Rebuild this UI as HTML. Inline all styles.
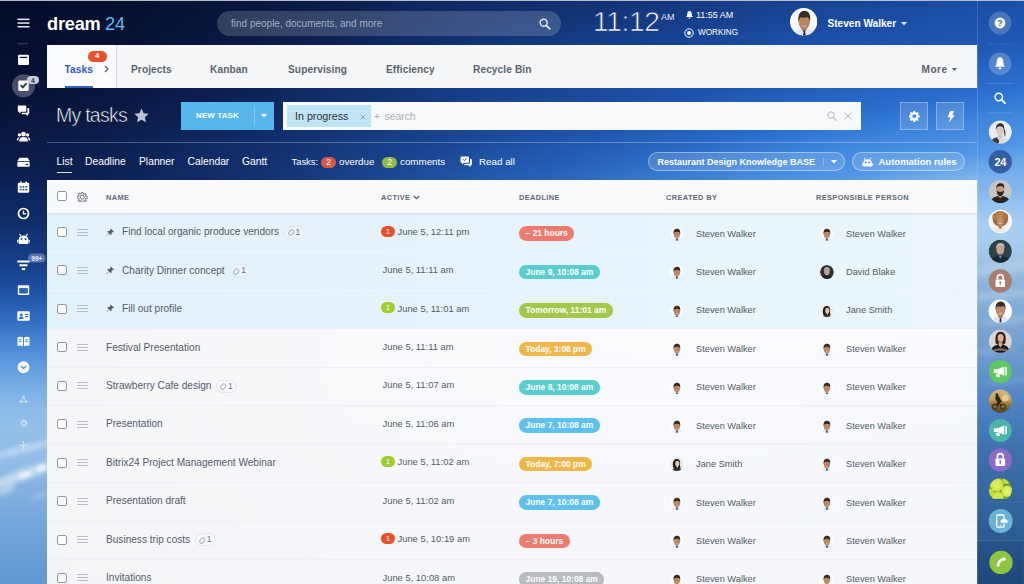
<!DOCTYPE html>
<html lang="en">
<head>
<meta charset="utf-8">
<title>My tasks</title>
<style>
*{box-sizing:border-box;margin:0;padding:0}
html,body{width:1024px;height:584px;overflow:hidden}
body{position:relative;font-family:"Liberation Sans",Arial,sans-serif;color:#535c69;background:#0a1738}
.abs{position:absolute}
#bg{position:absolute;left:0;top:0;width:1024px;height:584px;
 background:
  radial-gradient(ellipse 420px 150px at 0px 0px, rgba(4,8,30,.55) 0%, rgba(4,8,30,.3) 50%, rgba(4,8,30,0) 100%),
  linear-gradient(90deg, rgba(5,10,40,.74) 0px, rgba(5,10,40,.64) 128px, rgba(5,10,40,.48) 265px, rgba(5,10,40,.31) 384px, rgba(5,10,40,.17) 510px, rgba(5,10,40,.05) 700px, rgba(5,10,40,0) 800px),
  linear-gradient(169.6deg, #0c2256 0%, #14387e 14.5%, #1b4ea6 24%, #2058b4 29%, #2c70d0 35.5%, #3d84dc 38.7%, #4a90e2 41.5%, #5296e4 43%, #6eaaea 45%, #88bbee 47%, #9cc8f0 50%, #a5cdf2 52.5%, #a8cbee 58%, #9cc2ea 62%, #78a6da 68%, #5088c8 76%, #3a70b4 82%, #2f65a8 88.6%, #2a5c98 93.7%, #1e4878 100%);
}
#lbar{position:absolute;left:0;top:150px;width:47px;height:434px;overflow:hidden;
 background:linear-gradient(180deg, #0b1d4c 0px, #0c2050 20px, #0d2760 50px, #0e2a62 63px, #123578 90px, #17408a 115px, #1f50a0 140px, #2f68bc 165px, #4583d2 190px, #5f9bde 215px, #7cb0e6 240px, #8dbce8 260px, #93bfe8 280px, #93bde8 310px, #82b0e0 340px, #74a6db 375px, #6196d2 434px);
 -webkit-mask-image:linear-gradient(180deg, transparent 0px, #000 40px);mask-image:linear-gradient(180deg, transparent 0px, #000 40px)}
#lbar i,#rbar i{position:absolute;display:block;background:#fff;border-radius:50%;filter:blur(2.5px)}
#rbar{position:absolute;left:977px;top:150px;width:47px;height:434px;overflow:hidden;
 background:linear-gradient(180deg, #4f96e5 0px, #5a9ee8 10px, #7ab2ec 30px, #8ebfee 50px, #a5cdf2 70px, #a9cdee 90px, #a0c4e6 110px, #8fb6dc 130px, #86aed8 150px, #7aa3d0 180px, #6b98cc 210px, #5085c4 250px, #3e70ad 300px, #34669e 350px, #2c5a92 390px, #234d80 434px);
 -webkit-mask-image:linear-gradient(180deg, transparent 0px, #000 35px);mask-image:linear-gradient(180deg, transparent 0px, #000 35px)}
#bg2{display:none}
#topline{position:absolute;left:0;top:0;width:1024px;height:1px;background:#b9bccb}

/* left bar */



/* header */
#logo{position:absolute;left:47px;top:12px;font-size:18.2px;font-weight:bold;color:#fff;letter-spacing:-.2px;white-space:nowrap;line-height:24px}
#logo b{color:#5bbcf0;font-weight:normal;margin-left:4.5px}
#srch{position:absolute;left:217px;top:11px;width:344px;height:25px;border-radius:13px;background:rgba(255,255,255,.175)}
#srch span{position:absolute;left:14px;top:0;line-height:25px;font-size:10px;color:#a3adc6;white-space:nowrap}
#clock{position:absolute;left:593px;top:5.4px;font-size:28.2px;line-height:32px;color:#fff;white-space:nowrap;letter-spacing:-.35px;-webkit-text-stroke:.75px #143a82}
#ampm{position:absolute;left:661px;top:11.5px;font-size:9px;line-height:10px;color:#e6ebf5}
.hsm{position:absolute;font-size:9px;line-height:11px;color:#fff;white-space:nowrap}
#uname{position:absolute;left:827.5px;top:17px;font-size:10.1px;line-height:14px;font-weight:bold;color:#fff;white-space:nowrap}

/* tabs */
#tabs{position:absolute;left:47px;top:45px;width:930px;height:43px;background:#f6f7f8}
#tabs .t{position:absolute;top:0;line-height:49.5px;font-size:10.15px;font-weight:bold;color:#5a636f;white-space:nowrap;letter-spacing:.1px}
#tabs .on{color:#2f5fc5}

/* toolbar */
#ttl{position:absolute;left:56px;top:101px;font-size:19.5px;line-height:28px;color:#fff;white-space:nowrap;letter-spacing:-.75px;-webkit-text-stroke:.55px #0a1945}
#newt{position:absolute;left:181px;top:102px;width:93px;height:28px;background:#57b7ea}
#newt span{position:absolute;left:15px;top:0;line-height:28px;font-size:8px;font-weight:bold;color:#fff;letter-spacing:.1px;white-space:nowrap}
#filter{position:absolute;left:283px;top:102px;width:578px;height:28px;background:#f7f9fb}
#chip{position:absolute;left:3.5px;top:3px;width:84px;height:22px;background:#bfe4f4}
#chip span{position:absolute;left:8.5px;top:0;line-height:22.5px;font-size:10.7px;color:#2f3338;white-space:nowrap}
.sqb{position:absolute;top:102px;width:28px;height:28px;background:rgba(255,255,255,.15);border:1px solid rgba(255,255,255,.3)}
#sep{position:absolute;left:47px;top:142px;width:930px;height:1px;background:rgba(255,255,255,.28)}
.vt{position:absolute;top:154.8px;font-size:10.3px;line-height:14px;color:#fff;white-space:nowrap}
.cnt{position:absolute;top:156.5px;height:11px;width:15px;border-radius:6px;font-size:8.5px;line-height:11px;color:#fff;text-align:center}
.pill{position:absolute;top:152px;height:19.2px;border-radius:10px;background:rgba(255,255,255,.15);border:1px solid rgba(255,255,255,.4)}
.pill span{position:absolute;top:0;line-height:18.7px;font-size:9px;font-weight:bold;color:#fff;white-space:nowrap}

/* grid */
#grid{position:absolute;left:47px;top:180px;width:930px;height:404px;background:rgba(253,253,254,.965);overflow:hidden}
#ghead{position:absolute;left:0;top:0;width:930px;height:33px;background:#f9fafb;box-shadow:0 1px 2px rgba(120,140,160,.25);z-index:2}
#ghead .h{position:absolute;top:12.5px;font-size:7.4px;line-height:10px;font-weight:bold;letter-spacing:.38px;color:#616a75;white-space:nowrap}
.row{position:absolute;left:0;width:930px;border-top:1px solid #edf1f4}
.row.pin{background:linear-gradient(90deg,#e3f1fa 0%,#e7f3fb 50%,#ecf6fc 100%);border-top-color:#eef7fc}
.cb{position:absolute;left:9.5px;top:13px;width:10px;height:10px;border:1px solid #8f969c;border-radius:2px;background:#fff}
.hm{position:absolute;left:30px;top:14.5px;width:10.5px;height:7px;border-top:1px solid #b9bec3;border-bottom:1px solid #b9bec3}
.hm:after{content:"";position:absolute;left:0;top:2px;width:10.5px;height:1px;background:#b9bec3}
.pinic{position:absolute;left:59px;top:13.5px;width:8.5px;height:8.5px}
.nm{position:absolute;top:11.3px;font-size:10.1px;line-height:14px;color:#535c69;white-space:nowrap}
.att{display:inline-block;vertical-align:top;margin-left:5px;margin-top:0.5px;height:13px;width:20.5px;border:1px solid #e3e8ec;border-radius:7px;font-size:8.5px;line-height:11px;color:#6b737c;padding-left:10.5px;position:relative;background:rgba(255,255,255,.25)}
.att i{position:absolute;left:3.5px;top:2.5px;width:4.5px;height:6.5px;border:1px solid #a8afb6;border-radius:2.5px;transform:rotate(40deg)}
.bd{position:absolute;left:334px;top:11.5px;width:14px;height:11px;border-radius:5.5px;font-size:8px;line-height:11px;color:#fff;text-align:center}
.bd.r{background:#e8512b}.cnt.r{background:#d45a45}
.bd.g{background:#9dcf2f}.cnt.g{background:#90bb4a}
.ac{position:absolute;top:10.7px;font-size:9.4px;line-height:14px;color:#535c69;white-space:nowrap}
.dl{position:absolute;left:472px;top:12.3px;height:14.5px;border-radius:7.3px;padding:0 6.6px;font-size:8.45px;line-height:14.5px;color:#fff;white-space:nowrap;font-weight:bold}
.dl.red{background:#ee7a70}.dl.teal{background:#5ccdcf}.dl.green{background:#a3c94b}.dl.orange{background:#eeb74a}.dl.blue{background:#60c1ef}.dl.grey{background:#b8bcc0}
.av{position:absolute;border-radius:50%;overflow:hidden}
.pn{position:absolute;top:12.5px;font-size:9.25px;line-height:14px;color:#535c69;white-space:nowrap}

/* right bar */
#right{position:absolute;left:977px;top:0;width:47px;height:584px;border-left:1px solid rgba(255,255,255,.14)}
.rc{position:absolute;left:11.5px;width:23px;height:23px;border-radius:50%;overflow:hidden}
.rsep{position:absolute;left:10px;width:26px;height:1px;background:rgba(255,255,255,.16)}
</style>
</head>
<body>
<div id="bg"></div>
<div id="lbar">
 <i style="left:-12px;top:296px;width:72px;height:6px;opacity:.42;transform:rotate(-14deg)"></i>
 <i style="left:-14px;top:319px;width:76px;height:11px;opacity:.5;transform:rotate(-19deg)"></i>
 <i style="left:18px;top:322px;width:14px;height:6px;opacity:.6;transform:rotate(-19deg);filter:blur(1.500px)"></i>
 <i style="left:36px;top:315px;width:10px;height:6px;opacity:.65;transform:rotate(-19deg);filter:blur(1.500px)"></i>
 <i style="left:-6px;top:336px;width:22px;height:8px;opacity:.4;transform:rotate(-22deg)"></i>
 <i style="left:30px;top:343px;width:22px;height:5px;opacity:.22;transform:rotate(-20deg)"></i>
</div>
<div id="rbar">
 <i style="left:-8px;top:112px;width:64px;height:14px;opacity:.16;transform:rotate(-8deg)"></i>
 <i style="left:-6px;top:140px;width:60px;height:10px;opacity:.2;transform:rotate(-6deg)"></i>
 <i style="left:4px;top:166px;width:50px;height:9px;opacity:.16;transform:rotate(-6deg)"></i>
 <i style="left:-10px;top:196px;width:50px;height:8px;opacity:.13;transform:rotate(-6deg)"></i>
 <i style="left:6px;top:228px;width:46px;height:7px;opacity:.1;transform:rotate(-6deg)"></i>
</div>
<div id="topline"></div>

<svg id="left" class="abs" style="left:0;top:0" width="47" height="584" viewBox="0 0 47 584">
 <!-- hamburger -->
 <g fill="#e6e9f0"><rect x="17.500" y="18.600" width="12" height="1.500"/><rect x="17.500" y="22.300" width="12" height="1.500"/><rect x="17.500" y="26" width="12" height="1.500"/></g>
 <rect x="17.500" y="43.200" width="10.500" height="1" fill="#fff" opacity=".22"/>
 <!-- feed window -->
 <g transform="translate(18 54.800)"><rect width="11" height="10.200" rx="1.200" fill="#fff"/><rect x="1.700" y="2" width="7.600" height="1.300" fill="#0b1538"/><rect x="1.700" y="4.600" width="7.600" height="3.800" fill="#0b1538" opacity=".0"/></g>
 <!-- tasks active -->
 <circle cx="23.500" cy="85.800" r="11.500" fill="#fff" opacity=".26"/>
 <g transform="translate(18.300 80.500)"><rect width="10.400" height="10.400" rx="1.300" fill="#fff"/><path d="M2.300 4.700 L4.500 6.900 L8.300 2.600" fill="none" stroke="#27345c" stroke-width="1.700"/></g>
 <rect x="27" y="76" width="12" height="8" rx="4" fill="#c9cdd6"/>
 <text x="33" y="82.600" font-family="Liberation Sans, sans-serif" font-size="6.800" font-weight="bold" fill="#2b3350" text-anchor="middle">4</text>
 <!-- chat -->
 <g transform="translate(17.800 105.500)" fill="#fff"><path d="M0 .8 Q0 0 .8 0 H7.700 Q8.500 0 8.500 .8 V5.400 Q8.500 6.200 7.700 6.200 H3.600 L1.500 8 V6.200 H.8 Q0 6.200 0 5.400 Z"/><path d="M9.600 2.600 H10.600 Q11.400 2.600 11.400 3.400 V8 Q11.400 8.800 10.600 8.800 H10 V10.600 L7.900 8.800 H4.500 Q3.900 8.800 3.800 8.300 L4.200 7.300 H8.400 Q9.600 7.300 9.600 6.100 Z"/></g>
 <!-- people -->
 <g transform="translate(16.800 131.500)" fill="#fff"><circle cx="6.700" cy="2.600" r="2.400"/><path d="M2.300 10 C2.300 6.800 4 5.600 6.700 5.600 C9.400 5.600 11.100 6.800 11.100 10 Z"/><circle cx="2.600" cy="3.400" r="1.700"/><path d="M0 9 C0 6.600 1 5.700 3 5.700 C1.900 6.700 1.500 7.800 1.500 9 Z"/><circle cx="10.800" cy="3.400" r="1.700"/><path d="M13.400 9 C13.400 6.600 12.400 5.700 10.400 5.700 C11.500 6.700 11.900 7.800 11.900 9 Z"/></g>
 <!-- drive -->
 <g transform="translate(17.300 157.800)" fill="#fff"><path d="M2 0 H10.400 L12.400 3.400 H0 Z"/><rect x="0" y="4.300" width="12.400" height="4.700" rx=".8"/><rect x="8.300" y="6" width="2.600" height="1.300" fill="#10306e"/></g>
 <!-- calendar -->
 <g transform="translate(17.800 181.500)"><rect x="0" y="1.300" width="11.400" height="10" rx="1.200" fill="#fff"/><rect x="2.300" y="0" width="1.500" height="2.800" fill="#fff"/><rect x="7.600" y="0" width="1.500" height="2.800" fill="#fff"/><g fill="#153a80"><rect x="2" y="4.600" width="1.700" height="1.500"/><rect x="4.800" y="4.600" width="1.700" height="1.500"/><rect x="7.600" y="4.600" width="1.700" height="1.500"/><rect x="2" y="7.400" width="1.700" height="1.500"/><rect x="4.800" y="7.400" width="1.700" height="1.500"/><rect x="7.600" y="7.400" width="1.700" height="1.500"/></g></g>
 <!-- clock -->
 <g transform="translate(23.500 213.500)"><circle r="5" fill="none" stroke="#fff" stroke-width="1.700"/><path d="M0 -2.700 V.4 H2.600" fill="none" stroke="#fff" stroke-width="1.300"/></g>
 <!-- robot -->
 <g transform="translate(17.300 233.500)" fill="#fff"><path d="M1.200 7 C1.200 3.600 3.400 2 6.200 2 C9 2 11.200 3.600 11.200 7 V9.200 Q11.200 10.400 10 10.400 H2.400 Q1.200 10.400 1.200 9.200 Z"/><path d="M2.600 0 L4.200 2.600 L3.300 3 L1.800 .5 Z"/><path d="M9.800 0 L8.200 2.600 L9.100 3 L10.600 .5 Z"/><rect x="0" y="6.300" width="1" height="3" rx=".5"/><rect x="11.400" y="6.300" width="1" height="3" rx=".5"/><circle cx="4.200" cy="5.600" r="1" fill="#1b489a"/><circle cx="8.200" cy="5.600" r="1" fill="#1b489a"/></g>
 <!-- funnel -->
 <g fill="#fff"><rect x="17.300" y="260.500" width="12.400" height="2" /><rect x="19.500" y="264.300" width="8" height="2"/><rect x="21.800" y="268.100" width="3.400" height="2"/></g>
 <rect x="28" y="253.500" width="17.500" height="9" rx="4.500" fill="#6d84b4" opacity=".8"/>
 <text x="36.800" y="260.600" font-family="Liberation Sans, sans-serif" font-size="6.500" font-weight="bold" fill="#e8eefa" text-anchor="middle">99+</text>
 <!-- window -->
 <g transform="translate(17.800 285.300)"><rect width="11.400" height="9.600" rx="1.200" fill="#fff"/><rect x="1.400" y="2.800" width="8.600" height="5.400" fill="#2a62b4"/></g>
 <!-- contact card -->
 <g transform="translate(17.300 311.300)"><rect width="12.400" height="9.400" rx="1" fill="#fff"/><circle cx="4" cy="3.700" r="1.500" fill="#3372c4"/><path d="M1.600 7.800 C1.600 6 2.600 5.500 4 5.500 C5.400 5.500 6.400 6 6.400 7.800 Z" fill="#3372c4"/><rect x="7.600" y="2.600" width="3.400" height="1.100" fill="#3372c4"/><rect x="7.600" y="4.800" width="3.400" height="1.100" fill="#3372c4"/></g>
 <!-- book -->
 <g transform="translate(17.500 336.300)" fill="#fff"><path d="M0 1 C2 0 4 .2 5.500 1.300 V10 C4 9 2 8.800 0 9.600 Z"/><path d="M12 1 C10 0 8 .2 6.500 1.300 V10 C8 9 10 8.800 12 9.600 Z"/><g fill="#4585d3"><rect x="1.300" y="3" width="3" height=".9"/><rect x="1.300" y="5" width="3" height=".9"/><rect x="7.700" y="3" width="3" height=".9"/><rect x="7.700" y="5" width="3" height=".9"/></g></g>
 <!-- chevron circle -->
 <circle cx="23.500" cy="367.200" r="6" fill="#fff" opacity=".95"/>
 <path d="M20.900 366 L23.500 368.600 L26.100 366" fill="none" stroke="#5c97dc" stroke-width="1.400"/>
 <!-- dim icons -->
 <g fill="#fff" opacity=".5">
  <circle cx="23.500" cy="397" r="1.500"/><circle cx="21" cy="401.500" r="1.500"/><circle cx="26" cy="401.500" r="1.500"/><path d="M23.500 397 L21 401.500 H26 Z" fill="none" stroke="#fff" stroke-width=".8"/>
  <path d="M23.500 419.300 l1 .2 l.4 1.100 l1.100 -.4 l.8 .8 l-.5 1.100 l1.100 .5 v1.100 l-1.100 .5 l.5 1.100 l-.8 .8 l-1.100 -.5 l-.4 1.100 h-1.200 l-.4 -1.100 l-1.100 .5 l-.8 -.8 l.5 -1.100 l-1.100 -.5 v-1.100 l1.100 -.5 l-.5 -1.100 l.8 -.8 l1.100 .4 l.4 -1.100 z M23.500 421.700 a1.600 1.600 0 1 0 0 3.200 a1.600 1.600 0 0 0 0 -3.200 z" fill-rule="evenodd"/>
  <rect x="19.300" y="444.700" width="8.400" height="1.100"/><rect x="22.950" y="441" width="1.100" height="8.400"/>
 </g>
</svg>


<div id="logo">dream<b>24</b></div>
<div id="srch"><span>find people, documents, and more</span>
 <svg class="abs" style="left:322px;top:6.500px;width:12px;height:12px" viewBox="0 0 12 12"><circle cx="4.700" cy="4.700" r="3.500" fill="none" stroke="#e8ecf4" stroke-width="1.400"/><path d="M7.300 7.300 L10.800 10.800" stroke="#e8ecf4" stroke-width="1.700" stroke-linecap="round"/></svg>
</div>
<div id="clock">11:12</div>
<div id="ampm">AM</div>
<svg class="abs" style="left:685.500px;top:10.500px;width:7px;height:8px" viewBox="0 0 7 8"><path d="M3.500 0 C5 0 5.700 1.200 5.700 2.800 C5.700 4.600 6.300 5.300 7 6 H0 C.7 5.300 1.300 4.600 1.300 2.800 C1.300 1.200 2 0 3.500 0 Z M2.600 6.600 H4.400 C4.400 7.400 4 7.800 3.500 7.800 C3 7.800 2.600 7.400 2.600 6.600 Z" fill="#fff"/></svg>
<div class="hsm" style="left:696px;top:9.500px">11:55 AM</div>
<svg class="abs" style="left:684px;top:27.500px;width:10px;height:10px" viewBox="0 0 10 10"><circle cx="5" cy="5" r="4.200" fill="none" stroke="#fff" stroke-width="1"/><rect x="3.300" y="3.300" width="3.400" height="3.400" rx=".6" fill="#fff"/></svg>
<div class="hsm" style="left:698px;top:27px;font-size:8.2px">WORKING</div>
<svg class="abs" style="left:789.7px;top:8.2px;width:27.4px;height:27.4px" viewBox="0 0 27.4 27.4">
 <defs><clipPath id="cpu"><circle cx="13.7" cy="13.7" r="13.7"/></clipPath></defs>
 <g clip-path="url(#cpu)"><rect width="27.4" height="27.4" fill="#fdfdff"/>
 <path d="M3.500 28 C4 23 8 21.300 10.800 20.600 L14.200 23.500 L17.300 20.600 C20.500 21.300 24.400 23 24.800 28 Z" fill="#dfe6f4"/>
 <path d="M11.400 19 L16.800 19 L16.600 21.800 L14.200 23.600 L11.600 21.800 Z" fill="#a87557"/>
 <path d="M13 22.800 L14.200 22.300 L15.400 22.800 L15.100 24.200 L15.900 28 L12.900 28 L13.600 24.200 Z" fill="#1e2a48"/>
 <ellipse cx="14.200" cy="14.200" rx="5.600" ry="7.200" fill="#b98362"/>
 <path d="M10.900 17.200 Q14.200 19.800 17.500 17.200 Q14.200 18.600 10.900 17.200 Z" fill="#f4f0ee"/>
 <path d="M8.500 14.600 C7.200 6.800 10.500 2.800 14.400 2.800 C18.700 2.800 21.400 6.600 19.900 14.600 C19.700 11.600 18.800 9.600 17.400 9 C15.600 9.900 12.400 9.900 10.800 9.200 C9.500 10.200 8.800 12 8.500 14.600 Z" fill="#382c24"/>
 </g>
</svg>
<div id="uname">Steven Walker</div>
<svg class="abs" style="left:901px;top:21.500px;width:6px;height:4px" viewBox="0 0 6 4"><path d="M0 0 H6 L3 3.400 Z" fill="#dfe6f3"/></svg>


<div id="tabs">
 <div class="abs" style="left:0;top:0;width:69.500px;height:43px;background:#fafbfc;border-right:1px solid #d5d8dd"></div>
 <span class="t on" style="left:17.500px">Tasks</span>
 <div class="abs" style="left:17.500px;top:40.700px;width:28px;height:2.300px;background:#2f5fc5"></div>
 <div class="abs" style="left:41px;top:6px;width:18.500px;height:10.500px;border-radius:5.300px;background:#e8512b;color:#fff;font-size:7.800px;line-height:10.500px;text-align:center;font-weight:bold">4</div>
 <svg class="abs" style="left:57px;top:19.500px;width:5px;height:8px" viewBox="0 0 5 8"><path d="M1 1 L4 4 L1 7" fill="none" stroke="#535c69" stroke-width="1.200"/></svg>
 <span class="t" style="left:84px">Projects</span>
 <span class="t" style="left:163px">Kanban</span>
 <span class="t" style="left:241px">Supervising</span>
 <span class="t" style="left:339px">Efficiency</span>
 <span class="t" style="left:426px">Recycle Bin</span>
 <span class="t" style="left:874.500px;letter-spacing:.45px">More</span>
 <svg class="abs" style="left:904.500px;top:22.500px;width:5px;height:3.500px" viewBox="0 0 5 3.500"><path d="M0 0 H5 L2.500 3 Z" fill="#535c69"/></svg>
</div>


<div id="ttl">My tasks</div>
<svg class="abs" style="left:134px;top:108px;width:15px;height:15px" viewBox="0 0 20 20"><path d="M10 .8 L12.800 7 L19.600 7.700 L14.500 12.300 L16 19 L10 15.500 L4 19 L5.500 12.300 L.4 7.700 L7.200 7 Z" fill="#b9c2d3"/></svg>
<div id="newt"><span>NEW TASK</span>
 <div class="abs" style="left:72.500px;top:5px;width:1px;height:18px;background:rgba(255,255,255,.28)"></div>
 <svg class="abs" style="left:79.500px;top:12.200px;width:6px;height:4px" viewBox="0 0 6 4"><path d="M0 0 H6 L3 3.600 Z" fill="#fff"/></svg>
</div>
<div id="filter">
 <div id="chip"><span>In progress</span>
  <svg class="abs" style="left:73.500px;top:8.500px;width:6px;height:6px" viewBox="0 0 6 6"><path d="M.6 .6 L5.400 5.400 M5.400 .6 L.6 5.400" stroke="#8fa6b4" stroke-width="1"/></svg>
 </div>
 <span class="abs" style="left:91px;top:0;line-height:29px;font-size:10.4px;color:#a9b0b7;white-space:nowrap;word-spacing:1.500px">+ search</span>
 <svg class="abs" style="left:543.500px;top:9px;width:10px;height:10px" viewBox="0 0 10 10"><circle cx="4" cy="4" r="3.200" fill="none" stroke="#b5bbc1" stroke-width="1"/><path d="M6.300 6.300 L9.500 9.500" stroke="#b5bbc1" stroke-width="1.100"/></svg>
 <svg class="abs" style="left:561px;top:10px;width:8px;height:8px" viewBox="0 0 8 8"><path d="M.6 .6 L7.400 7.400 M7.400 .6 L.6 7.400" stroke="#b5bbc1" stroke-width="1"/></svg>
</div>
<div class="sqb" style="left:900px"><svg class="abs" style="left:8px;top:8px;width:10.500px;height:10.500px" viewBox="0 0 20 20"><path fill="#fff" fill-rule="evenodd" d="M8.300 0 h3.400 l.5 2.700 l1.700 .7 l2.300 -1.600 l2.400 2.400 l-1.600 2.300 l.7 1.700 l2.700 .5 v3.400 l-2.700 .5 l-.7 1.700 l1.600 2.300 l-2.400 2.400 l-2.300 -1.600 l-1.700 .7 l-.5 2.700 h-3.400 l-.5 -2.700 l-1.700 -.7 l-2.300 1.600 l-2.400 -2.400 l1.600 -2.300 l-.7 -1.700 l-2.700 -.5 v-3.400 l2.700 -.5 l.7 -1.700 l-1.600 -2.300 l2.400 -2.400 l2.300 1.600 l1.700 -.7 z M10 6.300 a3.700 3.700 0 1 0 0 7.400 a3.700 3.700 0 0 0 0 -7.400 z"/></svg></div>
<div class="sqb" style="left:936px"><svg class="abs" style="left:9.500px;top:7.500px;width:8px;height:11.500px" viewBox="0 0 8 11.500"><path d="M3.200 0 H7.200 L5.200 4.200 H7.800 L1.800 11.500 L3.300 6.200 H.6 Z" fill="#fff"/></svg></div>
<div id="sep"></div>
<span class="vt" style="left:56.500px">List</span>
<div class="abs" style="left:56.500px;top:172px;width:15.500px;height:1.300px;background:rgba(255,255,255,.85)"></div>
<span class="vt" style="left:85px">Deadline</span>
<span class="vt" style="left:139px">Planner</span>
<span class="vt" style="left:187.500px">Calendar</span>
<span class="vt" style="left:242px">Gantt</span>
<span class="vt" style="left:291.500px;font-size:9.400px">Tasks:</span>
<span class="cnt r" style="left:321px">2</span>
<span class="vt" style="left:339px;font-size:9.800px">overdue</span>
<span class="cnt g" style="left:382px">2</span>
<span class="vt" style="left:400px;font-size:9.800px">comments</span>
<svg class="abs" style="left:459.500px;top:155.500px;width:13px;height:12px" viewBox="0 0 13 12"><path d="M.5 1.300 Q.5 .5 1.300 .5 H8.200 Q9 .5 9 1.300 V5.900 Q9 6.700 8.200 6.700 H4.100 L2 8.500 V6.700 H1.300 Q.5 6.700 .5 5.900 Z" fill="#fff"/><path d="M3.200 3.300 L4.400 4.500 L6.500 2.300" fill="none" stroke="#1a4fa8" stroke-width="1"/><path d="M10.100 3.100 H11.100 Q11.900 3.100 11.900 3.900 V8.500 Q11.900 9.300 11.100 9.300 H10.500 V11.100 L8.400 9.300 H5 Q4.400 9.300 4.300 8.800 L4.700 7.800 H8.900 Q10.100 7.800 10.100 6.600 Z" fill="#fff"/></svg>
<span class="vt" style="left:479px;font-size:9.800px">Read all</span>
<div class="pill" style="left:647.500px;width:197.500px"><span style="left:9px">Restaurant Design Knowledge BASE</span>
 <div class="abs" style="left:174.500px;top:5px;width:1px;height:8px;background:rgba(255,255,255,.25)"></div>
 <svg class="abs" style="left:182.500px;top:7.300px;width:6px;height:4px" viewBox="0 0 6 4"><path d="M0 0 H6 L3 3.400 Z" fill="#fff"/></svg>
</div>
<div class="pill" style="left:852px;width:113px"><span style="left:25.500px;font-size:9.5px">Automation rules</span>
 <svg class="abs" style="left:8.500px;top:3.500px;width:11px;height:10px" viewBox="0 0 12.400 10.400"><g fill="#fff"><path d="M1.200 7 C1.200 3.600 3.400 2 6.200 2 C9 2 11.200 3.600 11.200 7 V9.200 Q11.200 10.400 10 10.400 H2.400 Q1.200 10.400 1.200 9.200 Z"/><path d="M2.600 0 L4.200 2.600 L3.300 3 L1.800 .5 Z"/><path d="M9.800 0 L8.200 2.600 L9.100 3 L10.600 .5 Z"/><rect x="0" y="6.300" width="1" height="3" rx=".5"/><rect x="11.400" y="6.300" width="1" height="3" rx=".5"/></g><circle cx="4.200" cy="5.600" r="1" fill="#3f8ce0"/><circle cx="8.200" cy="5.600" r="1" fill="#3f8ce0"/></svg>
</div>


<div id="grid">
 <div id="ghead">
  <span class="cb" style="top:11px"></span>
  <svg class="abs" style="left:30px;top:11.5px;width:10.5px;height:10.5px" viewBox="0 0 20 20"><path d="M10 6.2a3.8 3.8 0 1 0 0 7.6a3.8 3.8 0 0 0 0-7.6zM8.6 1h2.8l.5 2.6l1.6.7l2.2-1.5l2 2l-1.5 2.2l.7 1.6l2.6.5v2.8l-2.6.5l-.7 1.6l1.5 2.2l-2 2l-2.2-1.5l-1.6.7l-.5 2.6H8.600l-.5-2.6l-1.600-.7l-2.200 1.500l-2-2l1.500-2.200l-.7-1.600L.5 11.400V8.600l2.600-.5l.7-1.600L2.300 4.300l2-2l2.200 1.500l1.600-.7z" fill="none" stroke="#868d95" stroke-width="2.2"/></svg>
  <span class="h" style="left:59px">NAME</span>
  <span class="h" style="left:334px">ACTIVE</span>
  <svg class="abs" style="left:366px;top:15px;width:7px;height:5px" viewBox="0 0 7 5"><path d="M.8 1 L3.500 3.700 L6.200 1" fill="none" stroke="#535c69" stroke-width="1.2"/></svg>
  <span class="h" style="left:472px">DEADLINE</span>
  <span class="h" style="left:619px">CREATED BY</span>
  <span class="h" style="left:769px">RESPONSIBLE PERSON</span>
 </div>
<div class="row pin" style="top:33.00px;height:38.44px"><span class="cb"></span><span class="hm"></span><svg class="pinic" viewBox="0 0 10 10"><path d="M5.6 0.6 L9.4 4.4 L8.6 5.0 L7.9 4.7 L6.3 6.3 L6.5 8.0 L5.8 8.6 L3.8 6.6 L1.0 9.4 L0.6 9.0 L3.4 6.2 L1.4 4.2 L2.0 3.5 L3.7 3.7 L5.3 2.1 L5.0 1.4 Z" fill="#535c69"/></svg><span class="nm" style="left:75px">Find local organic produce vendors<span class="att"><i></i>1</span></span><span class="bd r">1</span><span class="ac" style="left:350.5px">June 5, 12:11 pm</span><span class="dl red">– 21 hours</span><svg class="av" style="left:623.1px;top:12.8px;width:13.8px;height:13.8px" viewBox="0 0 20 20"><circle cx="10" cy="10" r="10" fill="#fff" fill-opacity=".7"/><path d="M2 20.5 C2.300 17.200 5.500 15.800 10 15.800 C14.500 15.800 17.700 17.200 18 20.500 Z" fill="#d9e5f1"/><path d="M8.800 16 L10 17.400 L11.200 16 L11 20 L9 20 Z" fill="#27324e"/><ellipse cx="10" cy="10.400" rx="4.500" ry="5.800" fill="#bb8563"/><path d="M7.800 13 Q10 14.800 12.200 13 Q10 13.900 7.800 13 Z" fill="#fff"/><path d="M5.300 10.600 C4.400 5 7 2.600 10.200 2.600 C13.600 2.600 15.600 5.200 14.700 10.600 C14.300 8 13.400 6.900 10 6.900 C6.800 6.900 5.800 8 5.300 10.600 Z" fill="#3a2b24"/></svg><span class="pn" style="left:649px">Steven Walker</span><svg class="av" style="left:773.1px;top:12.8px;width:13.8px;height:13.8px" viewBox="0 0 20 20"><circle cx="10" cy="10" r="10" fill="#fff" fill-opacity=".7"/><path d="M2 20.5 C2.300 17.200 5.500 15.800 10 15.800 C14.500 15.800 17.700 17.200 18 20.500 Z" fill="#d9e5f1"/><path d="M8.800 16 L10 17.400 L11.200 16 L11 20 L9 20 Z" fill="#27324e"/><ellipse cx="10" cy="10.400" rx="4.500" ry="5.800" fill="#bb8563"/><path d="M7.800 13 Q10 14.800 12.200 13 Q10 13.900 7.800 13 Z" fill="#fff"/><path d="M5.300 10.600 C4.400 5 7 2.600 10.200 2.600 C13.600 2.600 15.600 5.200 14.700 10.600 C14.300 8 13.400 6.900 10 6.900 C6.800 6.900 5.800 8 5.300 10.600 Z" fill="#3a2b24"/></svg><span class="pn" style="left:799px">Steven Walker</span></div>
<div class="row pin" style="top:71.44px;height:38.44px"><span class="cb"></span><span class="hm"></span><svg class="pinic" viewBox="0 0 10 10"><path d="M5.6 0.6 L9.4 4.4 L8.6 5.0 L7.9 4.7 L6.3 6.3 L6.5 8.0 L5.8 8.6 L3.8 6.6 L1.0 9.4 L0.6 9.0 L3.4 6.2 L1.4 4.2 L2.0 3.5 L3.7 3.7 L5.3 2.1 L5.0 1.4 Z" fill="#535c69"/></svg><span class="nm" style="left:75px">Charity Dinner concept<span class="att"><i></i>1</span></span><span class="ac" style="left:335.5px">June 5, 11:11 am</span><span class="dl teal">June 9, 10:08 am</span><svg class="av" style="left:623.1px;top:12.8px;width:13.8px;height:13.8px" viewBox="0 0 20 20"><circle cx="10" cy="10" r="10" fill="#fff" fill-opacity=".7"/><path d="M2 20.5 C2.300 17.200 5.500 15.800 10 15.800 C14.500 15.800 17.700 17.200 18 20.500 Z" fill="#d9e5f1"/><path d="M8.800 16 L10 17.400 L11.200 16 L11 20 L9 20 Z" fill="#27324e"/><ellipse cx="10" cy="10.400" rx="4.500" ry="5.800" fill="#bb8563"/><path d="M7.800 13 Q10 14.800 12.200 13 Q10 13.900 7.800 13 Z" fill="#fff"/><path d="M5.300 10.600 C4.400 5 7 2.600 10.200 2.600 C13.600 2.600 15.600 5.200 14.700 10.600 C14.300 8 13.400 6.900 10 6.900 C6.800 6.900 5.800 8 5.300 10.600 Z" fill="#3a2b24"/></svg><span class="pn" style="left:649px">Steven Walker</span><svg class="av" style="left:773.1px;top:12.8px;width:13.8px;height:13.8px" viewBox="0 0 20 20"><circle cx="10" cy="10" r="10" fill="#2b3135"/><path d="M1.500 20.500 C2.500 16 6 14.800 10 14.800 C14 14.800 17.500 16 18.500 20.500 Z" fill="#1d2226"/><path d="M9 14.800 L10 17 L11 14.800 Z" fill="#5c7fa6"/><ellipse cx="10" cy="9.600" rx="4.100" ry="5.200" fill="#c7a28d"/><path d="M5.600 9 C5 4.600 7.600 3 10.200 3 C13 3 15 4.700 14.400 9 C13.800 6.800 12.800 6 10 6 C7.400 6 6.300 6.800 5.600 9 Z" fill="#a4a9ac"/></svg><span class="pn" style="left:799px">David Blake</span></div>
<div class="row pin" style="top:109.88px;height:38.44px"><span class="cb"></span><span class="hm"></span><svg class="pinic" viewBox="0 0 10 10"><path d="M5.6 0.6 L9.4 4.4 L8.6 5.0 L7.9 4.7 L6.3 6.3 L6.5 8.0 L5.8 8.6 L3.8 6.6 L1.0 9.4 L0.6 9.0 L3.4 6.2 L1.4 4.2 L2.0 3.5 L3.7 3.7 L5.3 2.1 L5.0 1.4 Z" fill="#535c69"/></svg><span class="nm" style="left:75px">Fill out profile</span><span class="bd g">1</span><span class="ac" style="left:350.5px">June 5, 11:01 am</span><span class="dl green">Tomorrow, 11:01 am</span><svg class="av" style="left:623.1px;top:12.8px;width:13.8px;height:13.8px" viewBox="0 0 20 20"><circle cx="10" cy="10" r="10" fill="#fff" fill-opacity=".7"/><path d="M2 20.5 C2.300 17.200 5.500 15.800 10 15.800 C14.500 15.800 17.700 17.200 18 20.500 Z" fill="#d9e5f1"/><path d="M8.800 16 L10 17.400 L11.200 16 L11 20 L9 20 Z" fill="#27324e"/><ellipse cx="10" cy="10.400" rx="4.500" ry="5.800" fill="#bb8563"/><path d="M7.800 13 Q10 14.800 12.200 13 Q10 13.900 7.800 13 Z" fill="#fff"/><path d="M5.300 10.600 C4.400 5 7 2.600 10.200 2.600 C13.600 2.600 15.600 5.200 14.700 10.600 C14.300 8 13.400 6.900 10 6.900 C6.800 6.900 5.800 8 5.300 10.600 Z" fill="#3a2b24"/></svg><span class="pn" style="left:649px">Steven Walker</span><svg class="av" style="left:773.1px;top:12.8px;width:13.8px;height:13.8px" viewBox="0 0 20 20"><circle cx="10" cy="10" r="10" fill="#e9ebed"/><path d="M4.600 15 C3 7 5.800 2.800 9.600 2.800 C13 2.800 15.600 5.500 14.600 10 C14.300 12.500 14.800 14.500 15.400 16 C12 17.500 6.500 17.500 4.600 15 Z" fill="#1f1c1c"/><path d="M2.500 20.500 C3 17 6 15.600 10 15.600 C14 15.600 17 17 17.500 20.500 Z" fill="#2a2c30"/><ellipse cx="10.600" cy="9.600" rx="3.100" ry="4.200" fill="#e2c4b2"/><path d="M9.200 13 L10.400 16.400 L12 13 Z" fill="#e2c4b2"/></svg><span class="pn" style="left:799px">Jane Smith</span></div>
<div class="row" style="top:148.32px;height:38.44px"><span class="cb"></span><span class="hm"></span><span class="nm" style="left:59px">Festival Presentation</span><span class="ac" style="left:335.5px">June 5, 11:11 am</span><span class="dl orange">Today, 3:08 pm</span><svg class="av" style="left:623.1px;top:12.8px;width:13.8px;height:13.8px" viewBox="0 0 20 20"><circle cx="10" cy="10" r="10" fill="#fff" fill-opacity=".7"/><path d="M2 20.5 C2.300 17.200 5.500 15.800 10 15.800 C14.500 15.800 17.700 17.200 18 20.500 Z" fill="#d9e5f1"/><path d="M8.800 16 L10 17.400 L11.200 16 L11 20 L9 20 Z" fill="#27324e"/><ellipse cx="10" cy="10.400" rx="4.500" ry="5.800" fill="#bb8563"/><path d="M7.800 13 Q10 14.800 12.200 13 Q10 13.900 7.800 13 Z" fill="#fff"/><path d="M5.300 10.600 C4.400 5 7 2.600 10.200 2.600 C13.600 2.600 15.600 5.200 14.700 10.600 C14.300 8 13.400 6.900 10 6.900 C6.800 6.900 5.800 8 5.300 10.600 Z" fill="#3a2b24"/></svg><span class="pn" style="left:649px">Steven Walker</span><svg class="av" style="left:773.1px;top:12.8px;width:13.8px;height:13.8px" viewBox="0 0 20 20"><circle cx="10" cy="10" r="10" fill="#fff" fill-opacity=".7"/><path d="M2 20.5 C2.300 17.200 5.500 15.800 10 15.800 C14.500 15.800 17.700 17.200 18 20.500 Z" fill="#d9e5f1"/><path d="M8.800 16 L10 17.400 L11.200 16 L11 20 L9 20 Z" fill="#27324e"/><ellipse cx="10" cy="10.400" rx="4.500" ry="5.800" fill="#bb8563"/><path d="M7.800 13 Q10 14.800 12.200 13 Q10 13.900 7.800 13 Z" fill="#fff"/><path d="M5.300 10.600 C4.400 5 7 2.600 10.200 2.600 C13.600 2.600 15.600 5.200 14.700 10.600 C14.300 8 13.400 6.900 10 6.900 C6.800 6.900 5.800 8 5.300 10.600 Z" fill="#3a2b24"/></svg><span class="pn" style="left:799px">Steven Walker</span></div>
<div class="row" style="top:186.76px;height:38.44px"><span class="cb"></span><span class="hm"></span><span class="nm" style="left:59px">Strawberry Cafe design<span class="att"><i></i>1</span></span><span class="ac" style="left:335.5px">June 5, 11:07 am</span><span class="dl teal">June 8, 10:08 am</span><svg class="av" style="left:623.1px;top:12.8px;width:13.8px;height:13.8px" viewBox="0 0 20 20"><circle cx="10" cy="10" r="10" fill="#fff" fill-opacity=".7"/><path d="M2 20.5 C2.300 17.200 5.500 15.800 10 15.800 C14.500 15.800 17.700 17.200 18 20.500 Z" fill="#d9e5f1"/><path d="M8.800 16 L10 17.400 L11.200 16 L11 20 L9 20 Z" fill="#27324e"/><ellipse cx="10" cy="10.400" rx="4.500" ry="5.800" fill="#bb8563"/><path d="M7.800 13 Q10 14.800 12.200 13 Q10 13.900 7.800 13 Z" fill="#fff"/><path d="M5.300 10.600 C4.400 5 7 2.600 10.200 2.600 C13.600 2.600 15.600 5.200 14.700 10.600 C14.300 8 13.400 6.900 10 6.900 C6.800 6.900 5.800 8 5.300 10.600 Z" fill="#3a2b24"/></svg><span class="pn" style="left:649px">Steven Walker</span><svg class="av" style="left:773.1px;top:12.8px;width:13.8px;height:13.8px" viewBox="0 0 20 20"><circle cx="10" cy="10" r="10" fill="#fff" fill-opacity=".7"/><path d="M2 20.5 C2.300 17.200 5.500 15.800 10 15.800 C14.500 15.800 17.700 17.200 18 20.500 Z" fill="#d9e5f1"/><path d="M8.800 16 L10 17.400 L11.200 16 L11 20 L9 20 Z" fill="#27324e"/><ellipse cx="10" cy="10.400" rx="4.500" ry="5.800" fill="#bb8563"/><path d="M7.800 13 Q10 14.800 12.200 13 Q10 13.900 7.800 13 Z" fill="#fff"/><path d="M5.300 10.600 C4.400 5 7 2.600 10.200 2.600 C13.600 2.600 15.600 5.200 14.700 10.600 C14.300 8 13.400 6.900 10 6.900 C6.800 6.900 5.800 8 5.300 10.600 Z" fill="#3a2b24"/></svg><span class="pn" style="left:799px">Steven Walker</span></div>
<div class="row" style="top:225.20px;height:38.44px"><span class="cb"></span><span class="hm"></span><span class="nm" style="left:59px">Presentation</span><span class="ac" style="left:335.5px">June 5, 11:06 am</span><span class="dl blue">June 7, 10:08 am</span><svg class="av" style="left:623.1px;top:12.8px;width:13.8px;height:13.8px" viewBox="0 0 20 20"><circle cx="10" cy="10" r="10" fill="#fff" fill-opacity=".7"/><path d="M2 20.5 C2.300 17.200 5.500 15.800 10 15.800 C14.500 15.800 17.700 17.200 18 20.500 Z" fill="#d9e5f1"/><path d="M8.800 16 L10 17.400 L11.200 16 L11 20 L9 20 Z" fill="#27324e"/><ellipse cx="10" cy="10.400" rx="4.500" ry="5.800" fill="#bb8563"/><path d="M7.800 13 Q10 14.800 12.200 13 Q10 13.900 7.800 13 Z" fill="#fff"/><path d="M5.300 10.600 C4.400 5 7 2.600 10.200 2.600 C13.600 2.600 15.600 5.200 14.700 10.600 C14.300 8 13.400 6.900 10 6.900 C6.800 6.900 5.800 8 5.300 10.600 Z" fill="#3a2b24"/></svg><span class="pn" style="left:649px">Steven Walker</span><svg class="av" style="left:773.1px;top:12.8px;width:13.8px;height:13.8px" viewBox="0 0 20 20"><circle cx="10" cy="10" r="10" fill="#fff" fill-opacity=".7"/><path d="M2 20.5 C2.300 17.200 5.500 15.800 10 15.800 C14.500 15.800 17.700 17.200 18 20.500 Z" fill="#d9e5f1"/><path d="M8.800 16 L10 17.400 L11.200 16 L11 20 L9 20 Z" fill="#27324e"/><ellipse cx="10" cy="10.400" rx="4.500" ry="5.800" fill="#bb8563"/><path d="M7.800 13 Q10 14.800 12.200 13 Q10 13.900 7.800 13 Z" fill="#fff"/><path d="M5.300 10.600 C4.400 5 7 2.600 10.200 2.600 C13.600 2.600 15.600 5.200 14.700 10.600 C14.300 8 13.400 6.900 10 6.900 C6.800 6.900 5.800 8 5.300 10.600 Z" fill="#3a2b24"/></svg><span class="pn" style="left:799px">Steven Walker</span></div>
<div class="row" style="top:263.64px;height:38.44px"><span class="cb"></span><span class="hm"></span><span class="nm" style="left:59px">Bitrix24 Project Management Webinar</span><span class="bd g">1</span><span class="ac" style="left:350.5px">June 5, 11:02 am</span><span class="dl orange">Today, 7:00 pm</span><svg class="av" style="left:623.1px;top:12.8px;width:13.8px;height:13.8px" viewBox="0 0 20 20"><circle cx="10" cy="10" r="10" fill="#e9ebed"/><path d="M4.600 15 C3 7 5.800 2.800 9.600 2.800 C13 2.800 15.600 5.500 14.600 10 C14.300 12.500 14.800 14.500 15.400 16 C12 17.500 6.500 17.500 4.600 15 Z" fill="#1f1c1c"/><path d="M2.500 20.500 C3 17 6 15.600 10 15.600 C14 15.600 17 17 17.500 20.500 Z" fill="#2a2c30"/><ellipse cx="10.600" cy="9.600" rx="3.100" ry="4.200" fill="#e2c4b2"/><path d="M9.200 13 L10.400 16.400 L12 13 Z" fill="#e2c4b2"/></svg><span class="pn" style="left:649px">Jane Smith</span><svg class="av" style="left:773.1px;top:12.8px;width:13.8px;height:13.8px" viewBox="0 0 20 20"><circle cx="10" cy="10" r="10" fill="#fff" fill-opacity=".7"/><path d="M2 20.5 C2.300 17.200 5.500 15.800 10 15.800 C14.500 15.800 17.700 17.200 18 20.500 Z" fill="#d9e5f1"/><path d="M8.800 16 L10 17.400 L11.200 16 L11 20 L9 20 Z" fill="#27324e"/><ellipse cx="10" cy="10.400" rx="4.500" ry="5.800" fill="#bb8563"/><path d="M7.800 13 Q10 14.800 12.200 13 Q10 13.900 7.800 13 Z" fill="#fff"/><path d="M5.300 10.600 C4.400 5 7 2.600 10.200 2.600 C13.600 2.600 15.600 5.200 14.700 10.600 C14.300 8 13.400 6.900 10 6.900 C6.800 6.900 5.800 8 5.300 10.600 Z" fill="#3a2b24"/></svg><span class="pn" style="left:799px">Steven Walker</span></div>
<div class="row" style="top:302.08px;height:38.44px"><span class="cb"></span><span class="hm"></span><span class="nm" style="left:59px">Presentation draft</span><span class="ac" style="left:335.5px">June 5, 11:02 am</span><span class="dl blue">June 7, 10:08 am</span><svg class="av" style="left:623.1px;top:12.8px;width:13.8px;height:13.8px" viewBox="0 0 20 20"><circle cx="10" cy="10" r="10" fill="#fff" fill-opacity=".7"/><path d="M2 20.5 C2.300 17.200 5.500 15.800 10 15.800 C14.500 15.800 17.700 17.200 18 20.500 Z" fill="#d9e5f1"/><path d="M8.800 16 L10 17.400 L11.200 16 L11 20 L9 20 Z" fill="#27324e"/><ellipse cx="10" cy="10.400" rx="4.500" ry="5.800" fill="#bb8563"/><path d="M7.800 13 Q10 14.800 12.200 13 Q10 13.900 7.800 13 Z" fill="#fff"/><path d="M5.300 10.600 C4.400 5 7 2.600 10.200 2.600 C13.600 2.600 15.600 5.200 14.700 10.600 C14.300 8 13.400 6.900 10 6.900 C6.800 6.900 5.800 8 5.300 10.600 Z" fill="#3a2b24"/></svg><span class="pn" style="left:649px">Steven Walker</span><svg class="av" style="left:773.1px;top:12.8px;width:13.8px;height:13.8px" viewBox="0 0 20 20"><circle cx="10" cy="10" r="10" fill="#fff" fill-opacity=".7"/><path d="M2 20.5 C2.300 17.200 5.500 15.800 10 15.800 C14.500 15.800 17.700 17.200 18 20.500 Z" fill="#d9e5f1"/><path d="M8.800 16 L10 17.400 L11.200 16 L11 20 L9 20 Z" fill="#27324e"/><ellipse cx="10" cy="10.400" rx="4.500" ry="5.800" fill="#bb8563"/><path d="M7.800 13 Q10 14.800 12.200 13 Q10 13.900 7.800 13 Z" fill="#fff"/><path d="M5.300 10.600 C4.400 5 7 2.600 10.200 2.600 C13.600 2.600 15.600 5.200 14.700 10.600 C14.300 8 13.400 6.900 10 6.900 C6.800 6.900 5.800 8 5.300 10.600 Z" fill="#3a2b24"/></svg><span class="pn" style="left:799px">Steven Walker</span></div>
<div class="row" style="top:340.52px;height:38.44px"><span class="cb"></span><span class="hm"></span><span class="nm" style="left:59px">Business trip costs<span class="att"><i></i>1</span></span><span class="bd r">1</span><span class="ac" style="left:350.5px">June 5, 10:19 am</span><span class="dl red">– 3 hours</span><svg class="av" style="left:623.1px;top:12.8px;width:13.8px;height:13.8px" viewBox="0 0 20 20"><circle cx="10" cy="10" r="10" fill="#fff" fill-opacity=".7"/><path d="M2 20.5 C2.300 17.200 5.500 15.800 10 15.800 C14.500 15.800 17.700 17.200 18 20.500 Z" fill="#d9e5f1"/><path d="M8.800 16 L10 17.400 L11.200 16 L11 20 L9 20 Z" fill="#27324e"/><ellipse cx="10" cy="10.400" rx="4.500" ry="5.800" fill="#bb8563"/><path d="M7.800 13 Q10 14.800 12.200 13 Q10 13.900 7.800 13 Z" fill="#fff"/><path d="M5.300 10.600 C4.400 5 7 2.600 10.200 2.600 C13.600 2.600 15.600 5.200 14.700 10.600 C14.300 8 13.400 6.900 10 6.900 C6.800 6.900 5.800 8 5.300 10.600 Z" fill="#3a2b24"/></svg><span class="pn" style="left:649px">Steven Walker</span><svg class="av" style="left:773.1px;top:12.8px;width:13.8px;height:13.8px" viewBox="0 0 20 20"><circle cx="10" cy="10" r="10" fill="#fff" fill-opacity=".7"/><path d="M2 20.5 C2.300 17.200 5.500 15.800 10 15.800 C14.500 15.800 17.700 17.200 18 20.500 Z" fill="#d9e5f1"/><path d="M8.800 16 L10 17.400 L11.200 16 L11 20 L9 20 Z" fill="#27324e"/><ellipse cx="10" cy="10.400" rx="4.500" ry="5.800" fill="#bb8563"/><path d="M7.800 13 Q10 14.800 12.200 13 Q10 13.900 7.800 13 Z" fill="#fff"/><path d="M5.300 10.600 C4.400 5 7 2.600 10.200 2.600 C13.600 2.600 15.600 5.200 14.700 10.600 C14.300 8 13.400 6.900 10 6.900 C6.800 6.900 5.800 8 5.300 10.600 Z" fill="#3a2b24"/></svg><span class="pn" style="left:799px">Steven Walker</span></div>
<div class="row" style="top:378.96px;height:38.44px"><span class="cb"></span><span class="hm"></span><span class="nm" style="left:59px">Invitations</span><span class="ac" style="left:335.5px">June 5, 10:08 am</span><span class="dl grey">June 19, 10:08 am</span><svg class="av" style="left:623.1px;top:12.8px;width:13.8px;height:13.8px" viewBox="0 0 20 20"><circle cx="10" cy="10" r="10" fill="#fff" fill-opacity=".7"/><path d="M2 20.5 C2.300 17.200 5.500 15.800 10 15.800 C14.500 15.800 17.700 17.200 18 20.500 Z" fill="#d9e5f1"/><path d="M8.800 16 L10 17.400 L11.200 16 L11 20 L9 20 Z" fill="#27324e"/><ellipse cx="10" cy="10.400" rx="4.500" ry="5.800" fill="#bb8563"/><path d="M7.800 13 Q10 14.800 12.200 13 Q10 13.900 7.800 13 Z" fill="#fff"/><path d="M5.300 10.600 C4.400 5 7 2.600 10.200 2.600 C13.600 2.600 15.600 5.200 14.700 10.600 C14.300 8 13.400 6.900 10 6.900 C6.800 6.900 5.800 8 5.300 10.600 Z" fill="#3a2b24"/></svg><span class="pn" style="left:649px">Steven Walker</span><svg class="av" style="left:773.1px;top:12.8px;width:13.8px;height:13.8px" viewBox="0 0 20 20"><circle cx="10" cy="10" r="10" fill="#fff" fill-opacity=".7"/><path d="M2 20.5 C2.300 17.200 5.500 15.800 10 15.800 C14.500 15.800 17.700 17.200 18 20.500 Z" fill="#d9e5f1"/><path d="M8.800 16 L10 17.400 L11.200 16 L11 20 L9 20 Z" fill="#27324e"/><ellipse cx="10" cy="10.400" rx="4.500" ry="5.800" fill="#bb8563"/><path d="M7.800 13 Q10 14.800 12.200 13 Q10 13.900 7.800 13 Z" fill="#fff"/><path d="M5.300 10.600 C4.400 5 7 2.600 10.200 2.600 C13.600 2.600 15.600 5.200 14.700 10.600 C14.300 8 13.400 6.900 10 6.900 C6.800 6.900 5.800 8 5.300 10.600 Z" fill="#3a2b24"/></svg><span class="pn" style="left:799px">Steven Walker</span></div>
</div>

<div id="right">
<svg class="abs" style="left:-0.7px;top:0" width="46" height="584" viewBox="0 0 46 584">
 <defs><clipPath id="rcp"><circle cx="0" cy="0" r="11.500"/></clipPath></defs>
 <!-- help -->
 <circle cx="23" cy="23" r="11.400" fill="#fff" opacity=".2"/>
 <circle cx="23" cy="23" r="5.400" fill="#fff"/>
 <text x="23" y="26.200" font-family="Liberation Sans, sans-serif" font-size="8.800" font-weight="bold" fill="#2a5fb8" text-anchor="middle">?</text>
 <rect x="10" y="43.500" width="26" height="1" fill="#fff" opacity=".07"/>
 <!-- bell -->
 <circle cx="23" cy="63.700" r="11.300" fill="#fff" opacity=".22"/>
 <path transform="translate(17.750 57.300) scale(1.500 1.560)" d="M3.500 0 C5 0 5.700 1.200 5.700 2.800 C5.700 4.600 6.300 5.300 7 6 H0 C.7 5.300 1.300 4.600 1.300 2.800 C1.300 1.200 2 0 3.500 0 Z M2.600 6.600 H4.400 C4.400 7.400 4 7.800 3.500 7.800 C3 7.800 2.600 7.400 2.600 6.600 Z" fill="#fff"/>
 <rect x="10" y="83" width="26" height="1" fill="#fff" opacity=".16"/>
 <!-- search -->
 <circle cx="21.800" cy="97" r="3.700" fill="none" stroke="#fff" stroke-width="1.500"/><path d="M24.600 99.800 L28 103.200" stroke="#fff" stroke-width="1.800" stroke-linecap="round"/>
 <rect x="10" y="112.500" width="26" height="1" fill="#fff" opacity=".16"/>

 <!-- av1: woman bw -->
 <g transform="translate(23.300 132)"><g clip-path="url(#rcp)"><circle r="11.700" fill="#ececec"/><path d="M-9.500 12 C-9 6.500 -5 5.200 -1 5.200 C3 5.200 8.500 6.500 9.500 12 Z" fill="#dcdcdc"/><path d="M-9.500 12 C-9 7 -6 5.600 -3.200 5.300 L-1 9 L-2 12 Z" fill="#3a3838"/><path d="M-2.600 2.500 L2 2.500 L1.800 6 L-1 8.600 L-3 6 Z" fill="#cfc8c3"/><ellipse cx="-.3" cy="-2" rx="3.900" ry="5" fill="#d2cbc6"/><path d="M-4.300 -1.600 C-5 -6.800 -2.600 -8.800 0 -8.800 C2.800 -8.800 4.600 -6.600 3.700 -2 C3.300 -4.600 2.200 -5.800 -.6 -5.800 C-2.800 -5.800 -3.900 -4.400 -4.300 -1.600 Z" fill="#34302e"/><path d="M3.400 -4 C5.400 -2 5.600 2 4.600 5 C4 3 3.800 0 3.400 -4 Z" fill="#34302e"/></g></g>
 <!-- 24 -->
 <g transform="translate(23.300 161.800)"><circle r="11.700" fill="#35609f"/><text x="0" y="4" font-family="Liberation Sans, sans-serif" font-size="11" font-weight="bold" fill="#fff" text-anchor="middle" letter-spacing="-.4">24</text></g>
 <!-- av2: bearded man grey bg -->
 <g transform="translate(23.300 191.500)"><g clip-path="url(#rcp)"><circle r="11.700" fill="#c7c5c3"/><path d="M-10 12 C-9.500 6 -4.500 4.600 0 4.600 C4.500 4.600 9.500 6 10 12 Z" fill="#262325"/><path d="M-2 2 L2 2 L1.800 5.400 L0 6.600 L-1.800 5.400 Z" fill="#b98a6e"/><ellipse cx="0" cy="-2.200" rx="3.700" ry="4.800" fill="#c79a7d"/><path d="M-3.700 -1.400 C-3.700 3.600 -1.500 4.600 0 4.600 C1.500 4.600 3.700 3.600 3.700 -1.400 C2.600 1.200 -2.600 1.200 -3.700 -1.400 Z" fill="#33261f"/><path d="M-3.900 -2.600 C-4.400 -6.900 -2 -8.200 0.200 -8.200 C2.700 -8.200 4.500 -6.700 3.900 -2.600 C3.400 -4.800 2.500 -5.600 0 -5.600 C-2.400 -5.600 -3.400 -4.800 -3.900 -2.600 Z" fill="#2a1f1b"/></g></g>
 <!-- av3: afro woman white bg -->
 <g transform="translate(23.300 221.500)"><g clip-path="url(#rcp)"><circle r="11.700" fill="#f6f3f0"/><circle cx="0" cy="-2.800" r="7.800" fill="#9c6a3e"/><circle cx="-4.500" cy="-5" r="3.300" fill="#b27f4d"/><circle cx="4.500" cy="-5" r="3.300" fill="#a87444"/><circle cx="0" cy="-7.200" r="3.300" fill="#b8854f"/><path d="M-9 12 C-8.500 7.500 -4 6.200 0 6.200 C4 6.200 8.500 7.500 9 12 Z" fill="#efe9e3"/><path d="M-1.800 3 L1.800 3 L1.600 6.400 L0 7.600 L-1.600 6.400 Z" fill="#b67f58"/><ellipse cx="0" cy="-.3" rx="3.500" ry="4.400" fill="#c48c63"/><path d="M-2 1.600 Q0 3.300 2 1.600 Q0 2.400 -2 1.600 Z" fill="#fff"/></g><circle r="11.400" fill="none" stroke="#fff" stroke-width=".8"/></g>
 <!-- av4: grey hair man dark bg -->
 <g transform="translate(23.300 251.200)"><g clip-path="url(#rcp)"><circle r="11.700" fill="#2f4149"/><path d="M-10 12 C-9.500 6.200 -4.500 4.800 0 4.800 C4.500 4.800 9.500 6.200 10 12 Z" fill="#1d2a33"/><path d="M-1.600 4.600 L0 7.600 L1.600 4.600 Z" fill="#6f93b8"/><ellipse cx="0" cy="-1.600" rx="3.900" ry="5" fill="#c9a48e"/><path d="M-4.200 -2 C-4.800 -6.800 -2.200 -8.200 0.200 -8.200 C2.800 -8.200 4.900 -6.600 4.200 -2 C3.700 -4.400 2.600 -5.300 0 -5.300 C-2.500 -5.300 -3.700 -4.400 -4.200 -2 Z" fill="#b4b8b9"/></g></g>
 <!-- lock brown -->
 <g transform="translate(23.300 281)"><circle r="11.700" fill="#a87e6e"/><rect x="-4.800" y="-1.600" width="9.600" height="7.600" rx="1" fill="#fff"/><path d="M-2.900 -1.400 V-3.400 A2.900 2.900 0 0 1 2.900 -3.400 V-1.400" fill="none" stroke="#fff" stroke-width="1.700"/><circle cx="0" cy="1.400" r="1.100" fill="#a87e6e"/><rect x="-.55" y="1.600" width="1.100" height="2.600" fill="#a87e6e"/></g>
 <!-- av5: man suit white bg -->
 <g transform="translate(23.300 311.200)"><g clip-path="url(#rcp)"><circle r="11.700" fill="#fbfcfe"/><path d="M-10 12 C-9.500 7 -5 5.600 -2.600 5.200 L.2 8 L3 5.200 C5.500 5.600 9.500 7 10 12 Z" fill="#dde5f2"/><path d="M-2.200 3.600 L2.600 3.600 L2.600 5.600 L.2 8 L-2.200 5.600 Z" fill="#a87557"/><path d="M-.7 7.400 L.2 7 L1.100 7.400 L.9 8.600 L1.600 12 L-1.200 12 L-.5 8.600 Z" fill="#1e2a48"/><ellipse cx=".2" cy="-.8" rx="4.600" ry="5.900" fill="#bd8867"/><path d="M-2.500 1.800 Q.2 4.200 2.900 1.800 Q.2 3 -2.500 1.800 Z" fill="#f7f3f1"/><path d="M-4.500 -.6 C-5.600 -7 -2.800 -9.800 .4 -9.800 C3.900 -9.800 6.100 -6.800 4.900 -.6 C4.700 -3 4 -4.600 2.900 -5.100 C1.400 -4.400 -1.200 -4.400 -2.600 -5 C-3.700 -4.200 -4.300 -2.700 -4.500 -.6 Z" fill="#382c24"/></g><circle r="11.400" fill="none" stroke="#fff" stroke-width=".7"/></g>
 <!-- av6: woman dark hair light bg -->
 <g transform="translate(23.300 341.300)"><g clip-path="url(#rcp)"><circle r="11.700" fill="#d9d5d2"/><path d="M-4.600 2 C-6 -7.500 -2.500 -9.600 .4 -9.600 C3.600 -9.600 6.600 -7 5 2 C3.500 4 -3 4 -4.600 2 Z" fill="#2e231f"/><path d="M-9.500 12 C-9 5 -5 3.200 0 3.200 C5 3.200 9 5 9.500 12 Z" fill="#17171a"/><path d="M-1.800 1 L2.200 1 L1.600 4.400 L.2 6.200 L-1.400 4.400 Z" fill="#d8a98c"/><ellipse cx=".3" cy="-3.300" rx="3" ry="4" fill="#dcae92"/><path d="M-7.500 8.500 C-3 6.500 3 6.500 7.500 8.500 L7 10.500 C3 9 -3 9 -7 10.500 Z" fill="#d8a98c" opacity=".55"/></g></g>
 <!-- megaphone green -->
 <g transform="translate(23.300 371.500)"><circle r="11.500" fill="#5dc860"/><g fill="#fff"><path d="M-6.500 -2.200 H-3 L4 -5 V4.200 L-3 1.600 H-6.500 Z"/><rect x="5" y="-4.800" width="1.500" height="8.800" rx=".7"/><path d="M-4.600 2.200 H-1 L-.2 5.400 H-3.800 Z"/></g></g>
 <!-- bike photo -->
 <g transform="translate(23.300 401.100)"><defs><linearGradient id="bkg" x1="0" y1="0" x2="0" y2="1"><stop offset="0" stop-color="#cdbb8c"/><stop offset=".45" stop-color="#c79c4e"/><stop offset=".62" stop-color="#9c7a3c"/><stop offset="1" stop-color="#4a3d22"/></linearGradient></defs><g clip-path="url(#rcp)"><rect x="-12" y="-12" width="24" height="24" fill="url(#bkg)"/><circle cx="5" cy="-3" r="3.500" fill="#f0dca0" opacity=".7"/><path d="M-4.500 -7.500 C-3 -8.500 -1.500 -7.500 -2 -6 L-.5 -3 L1.500 1 L-.5 2 L-1.500 5 L-3 5 L-3 1 L-5 -2 Z" fill="#2c2619"/><path d="M-6 5 L-2 1 L2 5 M-2 1 L1 0" fill="none" stroke="#2c2619" stroke-width="1"/><circle cx="-5.500" cy="5.500" r="2.600" fill="none" stroke="#2c2619" stroke-width=".9"/><circle cx="2.500" cy="5.500" r="2.600" fill="none" stroke="#2c2619" stroke-width=".9"/></g></g>
 <!-- megaphone teal -->
 <g transform="translate(23.300 430.500)"><circle r="11.500" fill="#4bb5a9"/><g fill="#fff"><path d="M-6.500 -2.200 H-3 L4 -5 V4.200 L-3 1.600 H-6.500 Z"/><rect x="5" y="-4.800" width="1.500" height="8.800" rx=".7"/><path d="M-4.600 2.200 H-1 L-.2 5.400 H-3.800 Z"/></g></g>
 <!-- lock purple -->
 <g transform="translate(23.300 460)"><circle r="11.700" fill="#8a6cc6"/><rect x="-4.800" y="-1.600" width="9.600" height="7.600" rx="1" fill="#fff"/><path d="M-2.900 -1.400 V-3.400 A2.900 2.900 0 0 1 2.900 -3.400 V-1.400" fill="none" stroke="#fff" stroke-width="1.700"/><circle cx="0" cy="1.400" r="1.100" fill="#8a6cc6"/><rect x="-.55" y="1.600" width="1.100" height="2.600" fill="#8a6cc6"/></g>
 <!-- lime -->
 <g transform="translate(23.300 489.800)"><defs><clipPath id="lmc"><path d="M-12 -12 H12 V9 H-12 Z"/></clipPath></defs><g clip-path="url(#lmc)"><g clip-path="url(#rcp)"><circle r="11.700" fill="#6fa82a"/><circle cx="-3.500" cy="-5" r="6.600" fill="#d2e64c"/><circle cx="7" cy="1.500" r="5.600" fill="#d8ea58"/><circle cx="-2.500" cy="7.500" r="5.800" fill="#d2e64c"/><circle cx="-10" cy="3" r="3.600" fill="#c4dc44"/><circle cx="6" cy="-9.500" r="3.600" fill="#c4dc44"/><circle cx="-3.500" cy="-5" r="3.600" fill="#dcec62"/><circle cx="7" cy="1.500" r="3" fill="#e2f06c"/></g></g></g>
 <!-- phone cloud -->
 <g transform="translate(23.700 521)"><circle r="12" fill="#6bb3d6"/><rect x="-4" y="-6" width="7.400" height="12.200" rx="1.300" fill="none" stroke="#fff" stroke-width="1.300"/><rect x="-1.200" y="4" width="1.800" height=".9" fill="#fff"/><path d="M.6 2.300 a1.900 1.900 0 0 1 .3 -3.700 a2.700 2.700 0 0 1 5.100 .3 a1.700 1.700 0 0 1 .2 3.400 Z" fill="#fff" stroke="#6bb3d6" stroke-width=".8"/></g>
 <!-- bottom dark band -->
 <rect x="0" y="541" width="47" height="43" fill="#0c2a4a" opacity=".12"/>
 <rect x="0" y="540" width="47" height="1" fill="#fff" opacity=".1"/><rect x="0" y="501.500" width="47" height="1" fill="#fff" opacity=".06"/>
 <!-- phone green -->
 <g transform="translate(24 562.400)"><circle r="11.700" fill="#8cc540"/><path d="M-4.600 3.200 C-3.800 -1.200 -.5 -4.400 3.800 -5.200 L5.200 -3 L3 -1.400 L2.200 -2.200 C.4 -1.400 -1 0 -1.800 1.800 L-1 2.600 L-2.600 4.800 Z" fill="#fff"/></g>
</svg>
</div>


</body>
</html>
